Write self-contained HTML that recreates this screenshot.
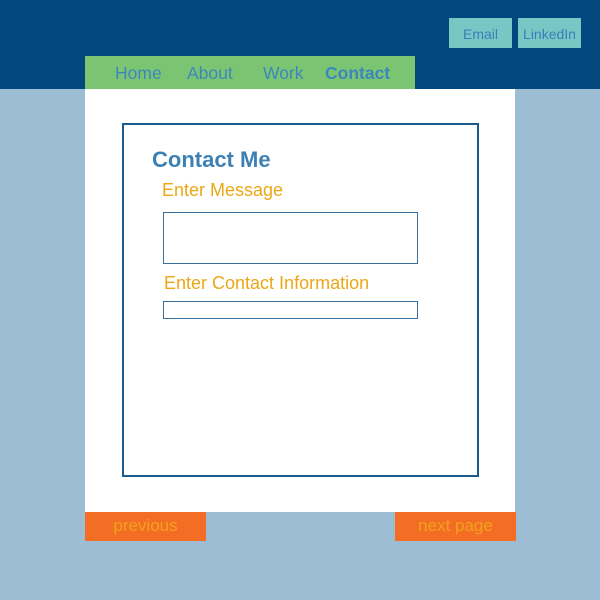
<!DOCTYPE html>
<html><head><style>
*{margin:0;padding:0;box-sizing:border-box}
body{width:600px;height:600px;background:#9dbdd4;position:relative;font-family:"Liberation Sans",sans-serif;overflow:hidden}
div,span{position:absolute}
.hdr{left:0;top:0;width:600px;height:89px;background:#02487e}
.btn{top:18px;height:30px;background:#79c7c5;color:#3a7fb5;font-size:14px;line-height:32px;text-align:center}
.nav{left:85px;top:56px;width:330px;height:33px;background:#7bc572}
.nav span{top:7px;font-size:17.5px;color:#3d86bd}
.panel{left:85px;top:89px;width:430px;height:423px;background:#fff}
.box{left:122px;top:123px;width:357px;height:354px;border:2px solid #1a5a8e}
.lbl{color:#eba716;font-size:18px}
.inp{border:1px solid #3a6e9a;background:#fff}
.foot{top:512px;height:29px;width:121px;background:#f46d25;color:#f0a21c;font-size:17px;text-align:center;line-height:28px}
</style></head><body>
<div class="hdr"></div>
<div class="btn" style="left:449px;width:63px">Email</div>
<div class="btn" style="left:518px;width:63px">LinkedIn</div>
<div class="nav">
<span style="left:30px">Home</span>
<span style="left:102px">About</span>
<span style="left:178px">Work</span>
<span style="left:240px;font-weight:bold">Contact</span>
</div>
<div class="panel"></div>
<div class="box"></div>
<span style="left:152px;top:147px;font-size:22px;font-weight:bold;color:#3d80b3">Contact Me</span>
<span class="lbl" style="left:162px;top:180px">Enter Message</span>
<div class="inp" style="left:163px;top:212px;width:255px;height:52px"></div>
<span class="lbl" style="left:164px;top:273px">Enter Contact Information</span>
<div class="inp" style="left:163px;top:301px;width:255px;height:18px"></div>
<div class="foot" style="left:85px">previous</div>
<div class="foot" style="left:395px">next page</div>
</body></html>
